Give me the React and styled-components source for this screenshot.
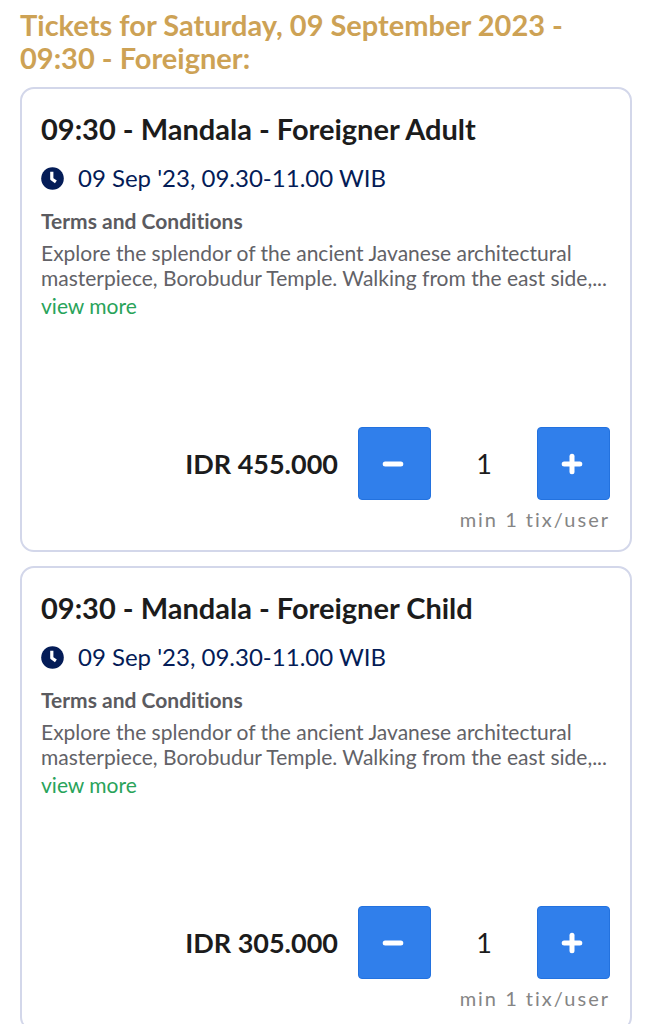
import React, { useState } from "react";
import styled, { createGlobalStyle } from "styled-components";

const GlobalStyle = createGlobalStyle`
    * {
        box-sizing: border-box;
    }
    body {
        margin: 0;
        background-color: white;
        font-family: "Lato", "Open Sans", sans-serif;
        font-variant-ligatures: none;
    }
`;
const Container = styled.main`
    padding: 8px 20px;
`;
const Heading = styled.h1`
    margin: 0 0 13px;
    font-size: 29px;
    line-height: 33px;
    font-weight: 700;
    color: #cda255;
`;
const Tickets = styled.div`
    display: flex;
    flex-direction: column;
    gap: 14px;
`;
const Card = styled.section`
    padding: 23px 20px 18px 19px;
    border: 2px solid #d3d7ea;
    border-radius: 14px;
    background-color: white;
`;
const Title = styled.h2`
    margin: 0 0 17px;
    font-size: 29px;
    line-height: 34px;
    font-weight: 700;
    color: #1c1c1c;
`;
const Schedule = styled.div`
    display: flex;
    align-items: center;
    gap: 14px;
    margin-bottom: 15px;
    font-size: 24px;
    line-height: 30px;
    color: #041c57;
`;
const ClockIcon = styled.svg`
    width: 23px;
    height: 23px;
    flex-shrink: 0;
`;
const TermsTitle = styled.h3`
    margin: 0 0 6px;
    font-size: 21px;
    line-height: 26px;
    font-weight: 700;
    color: #5b5b60;
`;
const Terms = styled.p`
    margin: 0 0 3px;
    font-size: 21px;
    line-height: 25px;
    color: #626267;
`;
const ViewMore = styled.a`
    display: block;
    width: fit-content;
    font-size: 21px;
    line-height: 26px;
    color: #29a35a;
    text-decoration: none;
`;
const Order = styled.div`
    display: flex;
    align-items: center;
    justify-content: flex-end;
    margin-top: 108px;
`;
const Price = styled.span`
    margin-right: 20px;
    font-size: 27px;
    font-weight: 700;
    color: #1c1c1c;
`;
const Button = styled.button`
    display: flex;
    align-items: center;
    justify-content: center;
    width: 73px;
    height: 73px;
    padding: 0 3px 0 0;
    border: 1px solid #2372df;
    border-radius: 4px;
    background-color: #307feb;
    color: white;
    cursor: pointer;
`;
const Amount = styled.output`
    width: 106px;
    font-size: 27px;
    text-align: center;
    color: #1c1c1c;
`;
const Note = styled.p`
    margin: 6px 0 0;
    font-size: 20px;
    line-height: 26px;
    letter-spacing: 2px;
    text-align: right;
    color: #858585;
`;

const tickets = [
    { id: 1, name: "09:30 - Mandala - Foreigner Adult", price: "455.000" },
    { id: 2, name: "09:30 - Mandala - Foreigner Child", price: "305.000" },
];

const Sign = ({ plus }) => (
    <svg
        width="22"
        height="22"
        viewBox="0 0 22 22"
        stroke="currentColor"
        strokeWidth="5"
        strokeLinecap="round"
        aria-hidden="true"
    >
        <path d="M3.2 11H18.8" />
        {plus && <path d="M11 3.2V18.8" />}
    </svg>
);

const Ticket = ({ ticket }) => {
    const [amount, setAmount] = useState(1);

    return (
        <Card>
            <Title>{ticket.name}</Title>
            <Schedule>
                <ClockIcon viewBox="0 0 23 23" aria-hidden="true">
                    <circle cx="11.5" cy="11.5" r="11.3" fill="#041c57" />
                    <path
                        d="M10.8 4.8V12L14.9 14.9"
                        fill="none"
                        stroke="white"
                        strokeWidth="3.2"
                        strokeLinejoin="round"
                    />
                </ClockIcon>
                <span>09 Sep '23, 09.30-11.00 WIB</span>
            </Schedule>
            <TermsTitle>Terms and Conditions</TermsTitle>
            <Terms>
                Explore the splendor of the ancient Javanese architectural
                masterpiece, Borobudur Temple. Walking from the east side,...
            </Terms>
            <ViewMore href="#terms">view more</ViewMore>
            <Order>
                <Price>IDR {ticket.price}</Price>
                <Button
                    type="button"
                    aria-label="Remove ticket"
                    onClick={() => setAmount(Math.max(1, amount - 1))}
                >
                    <Sign />
                </Button>
                <Amount>{amount}</Amount>
                <Button
                    type="button"
                    aria-label="Add ticket"
                    onClick={() => setAmount(amount + 1)}
                >
                    <Sign plus />
                </Button>
            </Order>
            <Note>min 1 tix/user</Note>
        </Card>
    );
};

const App = () => {
    return (
        <Container>
            <GlobalStyle />
            <Heading>
                Tickets for Saturday, 09 September 2023 - 09:30 - Foreigner:
            </Heading>
            <Tickets>
                {tickets.map((ticket) => (
                    <Ticket key={ticket.id} ticket={ticket} />
                ))}
            </Tickets>
        </Container>
    );
};

export default App;
